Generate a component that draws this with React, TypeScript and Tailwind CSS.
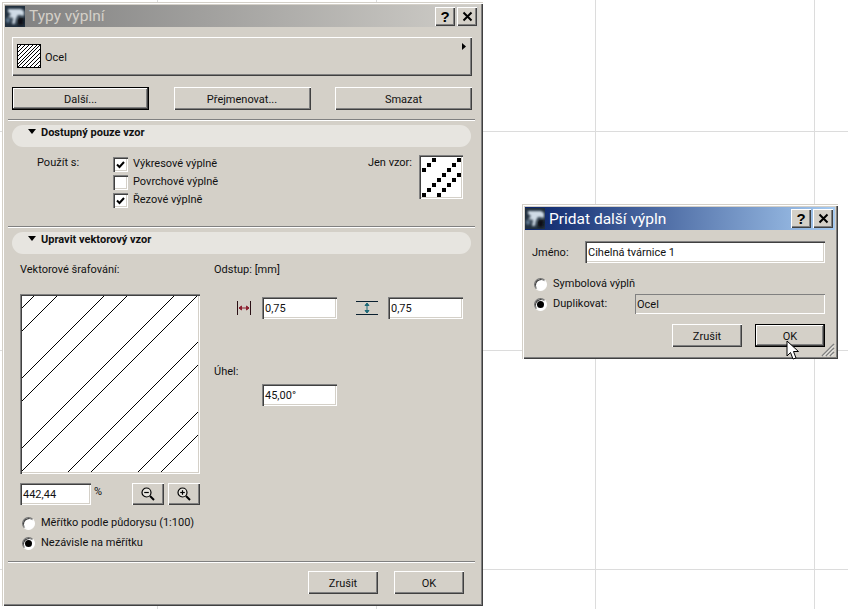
import React from 'react';

const raised = 'bg-[#d4d0c8] shadow-[inset_1px_1px_0_#ffffff,inset_-1px_-1px_0_#404040,inset_-2px_-2px_0_#808080]';
const sunken = 'bg-white shadow-[inset_1px_1px_0_#808080,inset_2px_2px_0_#404040,inset_-1px_-1px_0_#ffffff,inset_-2px_-2px_0_#d4d0c8]';
const winFrame = 'absolute flex flex-col bg-[#d4d0c8] shadow-[inset_1px_1px_0_#d4d0c8,inset_2px_2px_0_#ffffff,inset_-1px_-1px_0_#404040,inset_-2px_-2px_0_#808080]';

const AppIcon = () => (
  <svg width="20" height="21" viewBox="0 0 20 21" className="shrink-0">
    <defs>
      <filter id="soft"><feGaussianBlur stdDeviation="0.8" /></filter>
    </defs>
    <rect width="20" height="21" fill="#22303e" />
    <g filter="url(#soft)">
      <path d="M3 3 H16 L19 5 V10 L13 9 L11 13 L10 18 L7 18 L8 12 L3 11 L6 8 L3 6 Z" fill="#cfdbe6" />
      <path d="M1 12 L6 13 L4 17 L1 16 Z" fill="#5f7890" />
      <path d="M13 12 L19 12 L18 19 L13 19 Z" fill="#0a1018" />
    </g>
  </svg>
);

const TitleButton = ({ children }: { children: React.ReactNode }) => (
  <div className={`${raised} w-5 h-[19px] flex items-center justify-center text-black font-['Liberation_Sans',sans-serif] font-bold text-[15px] leading-none`}>
    {children}
  </div>
);

const TitleBar = ({ title, active, className }: { title: string; active?: boolean; className: string }) => (
  <div className={`flex items-center ${className} ${active ? 'bg-[linear-gradient(90deg,#0a246a,#a6caf0)] text-white' : 'bg-[linear-gradient(90deg,#7f7f7f,#cfcdc8)] text-[#d4d0c8]'}`}>
    <AppIcon />
    <span className="ml-1 pt-[2px] text-[15.5px] leading-none">{title}</span>
    <div className="ml-auto mr-[2px] flex gap-[2px]">
      <TitleButton>?</TitleButton>
      <TitleButton>
        <svg width="11" height="11" viewBox="0 0 11 11"><path d="M1.5 1.5 L9.5 9.5 M9.5 1.5 L1.5 9.5" stroke="#000" strokeWidth="2" /></svg>
      </TitleButton>
    </div>
  </div>
);

const Button = ({ label, w, isDefault }: { label: string; w: string; isDefault?: boolean }) => (
  <div className={`${w} h-[23px] flex items-center justify-center pt-[3px] ${isDefault ? 'border border-black bg-[#d4d0c8] shadow-[inset_-1px_-1px_0_#404040,inset_1px_1px_0_#ffffff,inset_-2px_-2px_0_#808080]' : raised}`}>
    {label}
  </div>
);

const Separator = ({ className }: { className: string }) => (
  <div className={`h-[2px] bg-[#ffffff] border-t border-[#808080] ${className}`} />
);

const SectionHeader = ({ title }: { title: string }) => (
  <div className="ml-[7px] w-[459px] h-[22px] rounded-[11px] bg-[#e7e5e0] flex items-start pl-4">
    <svg width="8" height="5" viewBox="0 0 8 5" className="mt-[4px] mr-[5px]"><path d="M0 0 H8 L4 5 Z" fill="#000" /></svg>
    <span className="pt-[1px] font-bold leading-[13px]">{title}</span>
  </div>
);

const Check = ({ label, checked }: { label: string; checked?: boolean }) => (
  <div className="flex items-center h-[15px] gap-[5px]">
    <div className={`${sunken} w-[15px] h-[15px] flex items-center justify-center`}>
      {checked && <svg width="9" height="8" viewBox="0 0 9 8"><path d="M1 3.5 L3.5 6 L8 1" stroke="#000" strokeWidth="2" fill="none" /></svg>}
    </div>
    <span>{label}</span>
  </div>
);

const Radio = ({ label, checked }: { label: string; checked?: boolean }) => (
  <div className="flex items-center h-[13px] gap-[6px]">
    <div className="w-[13px] h-[13px] rounded-full bg-white border border-[#707070] border-r-[#ffffff] border-b-[#ffffff] shadow-[inset_1px_1px_0_#404040] flex items-center justify-center">
      {checked && <div className="w-[7px] h-[7px] rounded-full bg-black" />}
    </div>
    <span>{label}</span>
  </div>
);

const Field = ({ value, w, className = '' }: { value: string; w: string; className?: string }) => (
  <div className={`${sunken} ${w} h-[22px] flex items-center pl-[3px] pt-[3px] ${className}`}>{value}</div>
);

const dots: [number, number][] = [
  [2, 0], [7, 0], [1, 1], [6, 1], [0, 2], [5, 2], [4, 3], [7, 3],
  [3, 4], [6, 4], [2, 5], [5, 5], [1, 6], [4, 6], [0, 7], [3, 7],
];

const PatternBox = () => (
  <div className={`${sunken} w-11 h-11 flex items-center justify-center`}>
    <svg width="40" height="40" viewBox="0 0 40 40" shapeRendering="crispEdges">
      {dots.map(([c, r]) => (
        <rect key={`${c}-${r}`} x={c * 5 + 1} y={r * 5 + 1} width="4" height="4" fill="#000" />
      ))}
    </svg>
  </div>
);

const hatchOffsets = [14, 37, 84, 107, 154, 177, 224, 247, 294, 317];

const HatchCanvas = () => (
  <div className={`${sunken} w-[180px] h-[180px] p-[2px]`}>
    <svg width="176" height="176" viewBox="1 1 176 176">
      {hatchOffsets.map((c) => (
        <line key={c} x1={c + 2} y1={-2} x2={-2} y2={c + 2} stroke="#000" strokeWidth="1" />
      ))}
    </svg>
  </div>
);

const Swatch = () => (
  <svg width="24" height="24" viewBox="0 0 24 24" className="shrink-0">
    <rect x="0.5" y="0.5" width="23" height="23" fill="#fff" stroke="#000" />
    {[4, 8, 12, 16, 20, 24, 28, 32, 36, 40, 44].map((c) => (
      <line key={c} x1={Math.min(c, 23)} y1={c > 23 ? c - 23 : 1} x2={c > 23 ? c - 23 : 1} y2={Math.min(c, 23)} stroke="#000" strokeWidth="1" />
    ))}
  </svg>
);

const ZoomIcon = ({ plus }: { plus?: boolean }) => (
  <svg width="14" height="14" viewBox="0 0 14 14" fill="none">
    <circle cx="5.5" cy="5.5" r="4.5" stroke="#000" strokeWidth="1.2" fill="#e8e6e0" />
    <path d="M3.2 5.5 H7.8" stroke="#000" strokeWidth="1.2" />
    {plus && <path d="M5.5 3.2 V7.8" stroke="#000" strokeWidth="1.2" />}
    <path d="M9 9 L13 13" stroke="#000" strokeWidth="2" />
  </svg>
);

export default function App() {
  return (
    <div className="relative w-[848px] h-[609px] overflow-hidden bg-white bg-[linear-gradient(#dcdcdc_1px,transparent_1px),linear-gradient(90deg,#dcdcdc_1px,transparent_1px)] bg-[size:219px_219px] bg-[position:157px_131px] font-['Roboto',sans-serif] text-[11px] text-[#111111]">
      {/* Typy výplní */}
      <div className={`${winFrame} left-[2px] top-[2px] w-[481px] h-[604px] pl-[3px] pt-[3px] pr-[4px]`}>
        <TitleBar title="Typy výplní" className="h-[22px]" />

        <div className={`${raised} relative ml-[7px] mt-[10px] w-[460px] h-[39px] flex items-center pl-[5px] pb-[1px] gap-[4px]`}>
          <Swatch />
          <span className="mt-[4px]">Ocel</span>
          <svg width="4" height="7" viewBox="0 0 4 7" className="absolute right-[6px] top-[6px]"><path d="M0 0 L4 3.5 L0 7 Z" fill="#000" /></svg>
        </div>

        <div className="ml-[7px] mt-[11px] flex w-[460px] justify-between">
          <Button label="Další..." w="w-[137px]" isDefault />
          <Button label="Přejmenovat..." w="w-[137px]" />
          <Button label="Smazat" w="w-[137px]" />
        </div>

        <Separator className="ml-[3px] mt-[9px] w-[467px]" />
        <div className="mt-[4px]"><SectionHeader title="Dostupný pouze vzor" /></div>

        <div className="h-[79px] flex pl-[32px] pt-[8px] pr-[16px]">
          <span className="w-[76px]">Použít s:</span>
          <div className="mt-[2px] flex flex-col gap-[3px]">
            <Check label="Výkresové výplně" checked />
            <Check label="Povrchové výplně" />
            <Check label="Řezové výplně" checked />
          </div>
          <span className="ml-auto mr-[7px]">Jen vzor:</span>
          <PatternBox />
        </div>

        <Separator className="ml-[3px] w-[467px]" />
        <div className="mt-[4px]"><SectionHeader title="Upravit vektorový vzor" /></div>

        <div className="flex pl-[15px] pt-[8px]">
          <div className="w-[194px] flex flex-col">
            <span className="h-[14px] pt-[1px] leading-[14px]">Vektorové šrafování:</span>
            <div className="mt-[18px]"><HatchCanvas /></div>
            <div className="mt-[9px] w-[180px] flex items-start">
              <Field value="442,44" w="w-[71px]" />
              <span className="ml-[3px] mt-[1px]">%</span>
              <div className={`${raised} ml-auto w-[32px] h-[22px] flex items-center justify-center`}><ZoomIcon /></div>
              <div className={`${raised} ml-[4px] w-[32px] h-[22px] flex items-center justify-center`}><ZoomIcon plus /></div>
            </div>
            <div className="mt-[12px] ml-[2px] flex flex-col gap-[7px]">
              <Radio label="Měřítko podle půdorysu (1:100)" />
              <Radio label="Nezávisle na měřítku" checked />
            </div>
          </div>
          <div className="flex flex-col">
            <span className="h-[14px] pt-[1px] leading-[14px]">Odstup: [mm]</span>
            <div className="mt-[21px] flex items-center">
              <svg width="16" height="14" viewBox="0 0 16 14" className="ml-[22px] mr-[10px]">
                <path d="M1.5 0 V14 M14.5 0 V14" stroke="#2a1015" strokeWidth="1" />
                <path d="M3 7 H13 M3 7 L5.5 5 V9 Z M13 7 L10.5 5 V9 Z" stroke="#8c2030" fill="#8c2030" strokeWidth="1" />
              </svg>
              <Field value="0,75" w="w-[75px]" />
              <svg width="22" height="16" viewBox="0 0 22 16" className="ml-[19px] mr-[10px]">
                <path d="M0 1.5 H22 M0 14.5 H22" stroke="#0a2030" strokeWidth="1" />
                <path d="M11 3 V13 M11 3 L9 5.5 H13 Z M11 13 L9 10.5 H13 Z" stroke="#1f6a78" fill="#1f6a78" strokeWidth="1" />
              </svg>
              <Field value="0,75" w="w-[75px]" />
            </div>
            <span className="mt-[45px] h-[14px] pt-[1px] leading-[14px]">Úhel:</span>
            <Field value="45,00°" w="w-[75px]" className="mt-[6px] ml-[48px]" />
          </div>
        </div>

        <Separator className="ml-[3px] mt-[11px] w-[467px]" />
        <div className="mt-[8px] flex justify-end gap-4 pr-[15px]">
          <Button label="Zrušit" w="w-[70px]" />
          <Button label="OK" w="w-[70px]" />
        </div>
      </div>

      {/* Přidat další výplň */}
      <div className={`${winFrame} left-[522px] top-[204px] w-[316px] h-[155px] pl-[3px] pt-[3px] pr-[3px]`}>
        <TitleBar title="Pridat další výpln" active className="h-[23px]" />
        <div className="mt-[11px] flex items-center pl-[7px]">
          <span className="w-[53px] pt-[3px]">Jméno:</span>
          <Field value="Cihelná tvárnice 1" w="w-[240px]" />
        </div>
        <div className="mt-[15px] ml-[9px]"><Radio label="Symbolová výplň" /></div>
        <div className="mt-[3px] ml-[9px] flex items-center">
          <div className="w-[101px]"><Radio label="Duplikovat:" checked /></div>
          <div className="w-[190px] h-5 flex items-center pl-[2px] pt-[2px] shadow-[inset_1px_1px_0_#808080,inset_-1px_-1px_0_#ffffff]">Ocel</div>
        </div>
        <div className="mt-[10px] flex justify-end gap-[13px] pr-[10px]">
          <Button label="Zrušit" w="w-[70px]" />
          <Button label="OK" w="w-[70px]" isDefault />
        </div>
        <svg width="15" height="15" viewBox="0 0 15 15" className="absolute right-[3px] bottom-[2px]">
          <path d="M14 2 L2 14 M14 6 L6 14 M14 10 L10 14" stroke="#808080" strokeWidth="1.5" />
          <path d="M14 3.5 L3.5 14 M14 7.5 L7.5 14 M14 11.5 L11.5 14" stroke="#ffffff" strokeWidth="0.8" />
        </svg>
        <svg width="14" height="21" viewBox="0 0 14 21" className="absolute left-[264px] top-[136px]">
          <path d="M1 1 V16 L4.5 12.5 L7 19 L10 18 L7.5 11.5 L12.5 11.5 Z" fill="#fff" stroke="#000" strokeWidth="1" />
        </svg>
      </div>
    </div>
  );
}
